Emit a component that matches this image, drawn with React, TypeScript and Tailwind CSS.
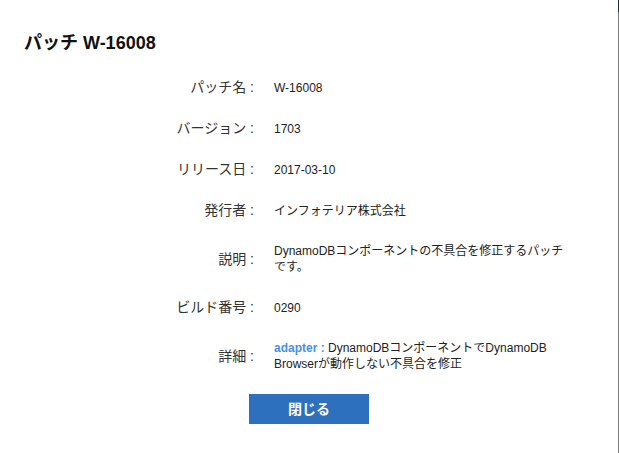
import React from "react";

const rows: { label: string; value: React.ReactNode }[] = [
  { label: "パッチ名", value: "W-16008" },
  { label: "バージョン", value: "1703" },
  { label: "リリース日", value: "2017-03-10" },
  { label: "発行者", value: "インフォテリア株式会社" },
  { label: "説明", value: "DynamoDBコンポーネントの不具合を修正するパッチです。" },
  { label: "ビルド番号", value: "0290" },
  {
    label: "詳細",
    value: (
      <>
        <span className="font-bold text-[#4a8fe7]">adapter : </span>
        DynamoDBコンポーネントでDynamoDB Browserが動作しない不具合を修正
      </>
    ),
  },
];

export default function App() {
  return (
    <div className="flex h-[453px] w-[619px] bg-white font-['Liberation_Sans','Noto_Sans_CJK_JP',sans-serif] text-[#222]">
      <div className="flex-1">
        <h1 className="pl-6 pt-[30px] text-[18px] font-bold leading-[27px] text-[#111]">
          パッチ W-16008
        </h1>
        <div className="mt-[10px] grid grid-cols-[254px_300px] gap-x-5">
          {rows.map((r) => (
            <React.Fragment key={r.label}>
              <div className="flex items-center justify-end py-3 text-[14px] leading-[17px] text-[#333]">
                {r.label} :
              </div>
              <div className="flex items-center py-3 text-[12px] leading-[16px]">
                <p>{r.value}</p>
              </div>
            </React.Fragment>
          ))}
        </div>
        <div className="mt-[10px] flex justify-center">
          <button className="h-[30px] w-[120px] bg-[#2d71be] text-[14px] font-bold text-white">
            閉じる
          </button>
        </div>
      </div>
      <div className="flex w-px flex-col">
        <div className="h-3 bg-[#1b2a3f]" />
        <div className="flex-1 bg-[#7a7a7a]" />
      </div>
    </div>
  );
}
